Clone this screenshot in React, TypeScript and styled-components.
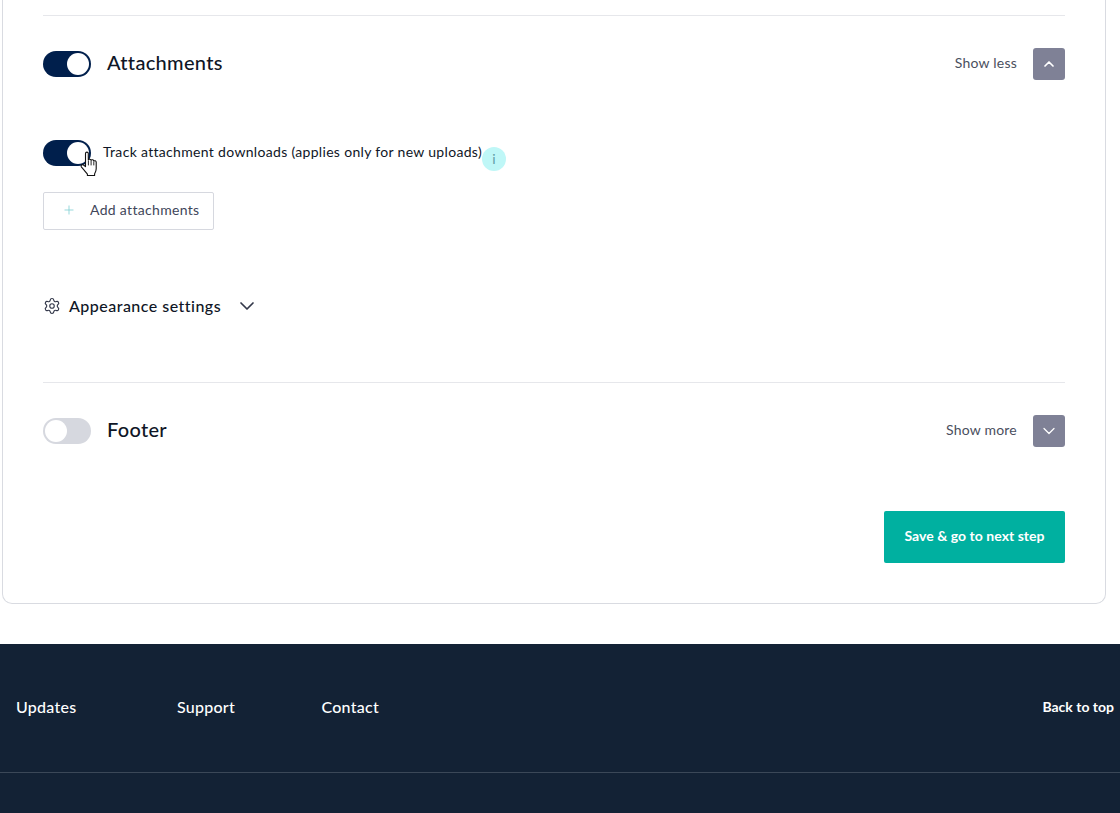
import styled, { createGlobalStyle } from "styled-components";
import { ChevronDown, ChevronUp, Plus, Settings } from "lucide-react";

const GlobalStyle = createGlobalStyle`
  html, body {
    margin: 0;
    padding: 0;
    background: #fff;
  }
  body {
    font-family: "Lato", "Liberation Sans", sans-serif;
    color: #0f1626;
  }
`;

interface SectionHeaderProps {
  title: string;
  on: boolean;
  actionLabel: string;
}

const SectionHeader = ({ title, on, actionLabel }: SectionHeaderProps) => (
  <HeaderRow>
    <Switch $on={on} />
    <Title>{title}</Title>
    <ActionLabel>{actionLabel}</ActionLabel>
    <ExpandButton>
      {on ? <ChevronUp size={16} strokeWidth={2.6} /> : <ChevronDown size={20} strokeWidth={1.5} />}
    </ExpandButton>
  </HeaderRow>
);

const HandCursor = () => (
  <CursorWrap>
    <svg width="20" height="26" viewBox="0 0 18 26">
      <path
        d="M5.5 2.6c0-2 2.8-2 2.8 0v6.2c.6-1 2.6-.8 2.8.4.7-.8 2.5-.5 2.7.8.8-.6 2.3-.2 2.4 1.1v6.6c0 2.4-.7 3.6-1.6 5.2v1.6H7.4v-1.4C5.8 21 3.7 18.6 1.5 16.1c-1.2-1.5.6-3.2 2-2.1l2 1.7V2.6z"
        fill="#fff"
        stroke="#111"
        strokeWidth="1.1"
        strokeLinejoin="round"
      />
      <path d="M8.4 9.4v5M11.1 9.4v5M13.8 10.4v4" stroke="#111" strokeWidth="0.9" fill="none" />
    </svg>
  </CursorWrap>
);

export default function App() {
  return (
    <Page>
      <GlobalStyle />
      <Card>
        <Section $height={367}>
          <SectionHeader title="Attachments" on actionLabel="Show less" />
          <TrackRow>
            <SwitchHolder>
              <Switch $on />
              <HandCursor />
            </SwitchHolder>
            <TrackLabel>Track attachment downloads (applies only for new uploads)</TrackLabel>
            <InfoBadge>i</InfoBadge>
          </TrackRow>
          <AddButton>
            <Plus size={14} strokeWidth={1.4} color="#7fcfd3" />
            Add attachments
          </AddButton>
          <AppearanceRow>
            <Settings size={18} strokeWidth={1.5} color="#33384a" />
            <AppearanceLabel>Appearance settings</AppearanceLabel>
            <ChevronDown size={24} strokeWidth={1.7} color="#33384a" />
          </AppearanceRow>
        </Section>
        <Section $height={97}>
          <SectionHeader title="Footer" on={false} actionLabel="Show more" />
        </Section>
        <SaveRow>
          <SaveButton>Save &amp; go to next step</SaveButton>
        </SaveRow>
      </Card>
      <SiteFooter>
        <FooterNav>
          <FooterLink $width={161}>Updates</FooterLink>
          <FooterLink $width={144.5}>Support</FooterLink>
          <FooterLink>Contact</FooterLink>
          <BackToTop>Back to top</BackToTop>
        </FooterNav>
      </SiteFooter>
    </Page>
  );
}

const Page = styled.div`
  width: 1120px;
  height: 813px;
  overflow: hidden;
`;

const Card = styled.div`
  box-sizing: border-box;
  width: 1104px;
  height: 604px;
  margin-left: 2px;
  padding: 15px 40px 0;
  border: 1px solid #d9dbe1;
  border-top: none;
  border-radius: 0 0 10px 10px;
  background: #fff;
`;

const Section = styled.section<{ $height: number }>`
  box-sizing: border-box;
  height: ${(p) => p.$height}px;
  padding-top: 32px;
  border-top: 1px solid #e6e7eb;
`;

const HeaderRow = styled.div`
  display: flex;
  align-items: center;
  height: 32px;
`;

const Switch = styled.div<{ $on: boolean }>`
  position: relative;
  flex: none;
  width: 48px;
  height: 26px;
  border-radius: 13px;
  background: ${(p) => (p.$on ? "#001f4c" : "#d6d8df")};
  &::after {
    content: "";
    position: absolute;
    top: 2px;
    left: ${(p) => (p.$on ? "24px" : "2px")};
    width: 22px;
    height: 22px;
    border-radius: 50%;
    background: #fff;
  }
`;

const Title = styled.h2`
  flex: 1;
  margin: 0 0 5px 16px;
  font-size: 20px;
  line-height: 28px;
  font-weight: 500;
  color: #0f1626;
  letter-spacing: 0.3px;
`;

const ActionLabel = styled.span`
  margin: 0 16px 3px 0;
  font-size: 14px;
  letter-spacing: 0.22px;
  color: #4a4f5e;
`;

const ExpandButton = styled.button`
  display: flex;
  align-items: center;
  justify-content: center;
  width: 32px;
  height: 32px;
  padding: 0;
  border: none;
  border-radius: 3px;
  background: #7f8196;
  color: #fff;
`;

const TrackRow = styled.div`
  display: flex;
  align-items: flex-start;
  height: 52px;
  margin-top: 60px;
`;

const SwitchHolder = styled.div`
  position: relative;
  width: 48px;
  height: 26px;
  margin-right: 12px;
`;

const CursorWrap = styled.div`
  position: absolute;
  left: 36px;
  top: 11px;
  line-height: 0;
`;

const TrackLabel = styled.span`
  margin-top: 2px;
  font-size: 14px;
  line-height: 20px;
  letter-spacing: 0.32px;
  color: #0f1626;
`;

const InfoBadge = styled.span`
  flex: none;
  width: 24px;
  height: 24px;
  margin-top: 7px;
  border-radius: 50%;
  background: #bff7f7;
  color: #5f9ea6;
  font-size: 14px;
  line-height: 24px;
  text-align: center;
`;

const AddButton = styled.button`
  box-sizing: border-box;
  display: flex;
  align-items: center;
  gap: 14px;
  width: 171px;
  height: 38px;
  padding: 0 0 3px 18px;
  border: 1px solid #d6d8df;
  border-radius: 2px;
  background: #fff;
  font-family: inherit;
  font-size: 14px;
  letter-spacing: 0.32px;
  color: #41465a;
`;

const AppearanceRow = styled.div`
  display: flex;
  align-items: center;
  height: 24px;
  margin-top: 64px;
`;

const AppearanceLabel = styled.span`
  margin: 0 14px 2px 8px;
  font-size: 16px;
  font-weight: 500;
  letter-spacing: 0.47px;
  color: #0f1626;
`;

const SaveRow = styled.div`
  display: flex;
  justify-content: flex-end;
  margin-top: 32px;
`;

const SaveButton = styled.button`
  width: 181px;
  height: 52px;
  padding: 0 0 3px;
  border: none;
  border-radius: 2px;
  background: #00b0a0;
  color: #fff;
  font-family: inherit;
  font-size: 14px;
  font-weight: 700;
  letter-spacing: 0.03px;
`;

const SiteFooter = styled.footer`
  height: 169px;
  margin-top: 40px;
  background: #132235;
  color: #fff;
`;

const FooterNav = styled.nav`
  box-sizing: border-box;
  display: flex;
  align-items: center;
  height: 129px;
  padding: 0 6px 3px 16px;
  border-bottom: 1px solid #3b4858;
`;

const FooterLink = styled.a<{ $width?: number }>`
  width: ${(p) => (p.$width ? `${p.$width}px` : "auto")};
  font-size: 16px;
  font-weight: 500;
  letter-spacing: 0.25px;
`;

const BackToTop = styled.a`
  margin-left: auto;
  font-size: 14px;
  font-weight: 700;
`;
